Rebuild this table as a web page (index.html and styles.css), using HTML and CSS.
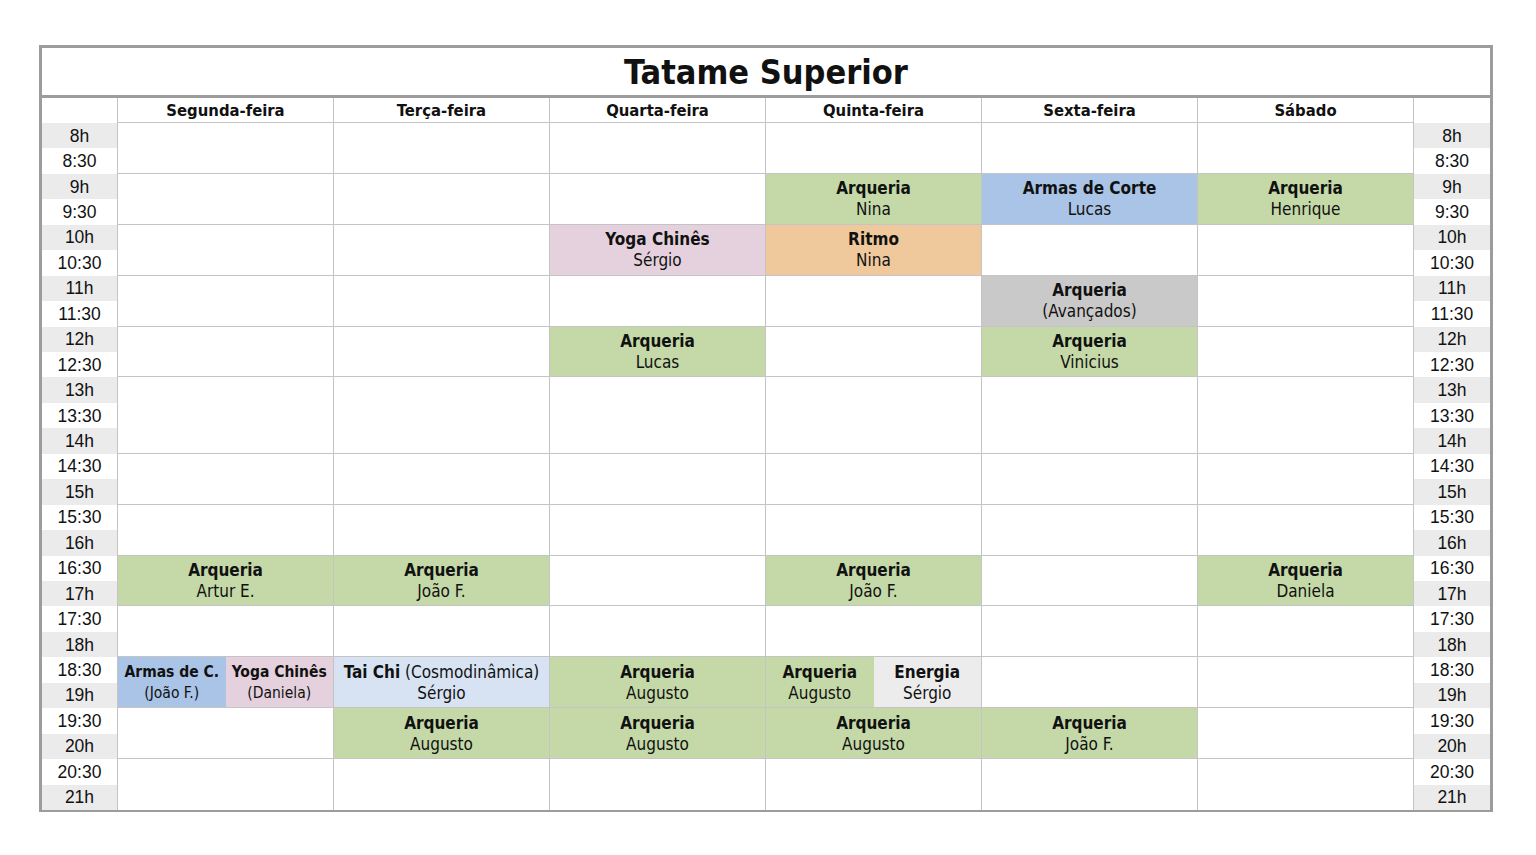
FILE: index.html
```html
<!DOCTYPE html>
<html lang="pt">
<head>
<meta charset="utf-8">
<title>Tatame Superior</title>
<link rel="stylesheet" href="styles.css">
</head>
<body>
<div class="sheet">
  <div class="title">Tatame Superior</div>
  <div class="head">
    <div class="hcell corner"></div>
    <div class="hcell day-h">Segunda-feira</div>
    <div class="hcell day-h">Terça-feira</div>
    <div class="hcell day-h">Quarta-feira</div>
    <div class="hcell day-h">Quinta-feira</div>
    <div class="hcell day-h">Sexta-feira</div>
    <div class="hcell day-h">Sábado</div>
    <div class="hcell corner right"></div>
  </div>
  <div class="body">
    <div class="times">
      <div class="t full">8h</div><div class="t">8:30</div>
      <div class="t full">9h</div><div class="t">9:30</div>
      <div class="t full">10h</div><div class="t">10:30</div>
      <div class="t full">11h</div><div class="t">11:30</div>
      <div class="t full">12h</div><div class="t">12:30</div>
      <div class="t full">13h</div><div class="t">13:30</div>
      <div class="t full">14h</div><div class="t">14:30</div>
      <div class="t full">15h</div><div class="t">15:30</div>
      <div class="t full">16h</div><div class="t">16:30</div>
      <div class="t full">17h</div><div class="t">17:30</div>
      <div class="t full">18h</div><div class="t">18:30</div>
      <div class="t full">19h</div><div class="t">19:30</div>
      <div class="t full">20h</div><div class="t">20:30</div>
      <div class="t full">21h</div>
    </div>

    <div class="day">
      <div class="blk"></div>
      <div class="blk"></div>
      <div class="blk"></div>
      <div class="blk"></div>
      <div class="blk"></div>
      <div class="blk tall"></div>
      <div class="blk"></div>
      <div class="blk"></div>
      <div class="blk ev green"><b>Arqueria</b><span>Artur E.</span></div>
      <div class="blk"></div>
      <div class="blk split">
        <div class="half small ev blue"><b>Armas de C.</b><span>(João F.)</span></div>
        <div class="half small ev pink"><b>Yoga Chinês</b><span>(Daniela)</span></div>
      </div>
      <div class="blk"></div>
      <div class="blk last"></div>
    </div>

    <div class="day">
      <div class="blk"></div>
      <div class="blk"></div>
      <div class="blk"></div>
      <div class="blk"></div>
      <div class="blk"></div>
      <div class="blk tall"></div>
      <div class="blk"></div>
      <div class="blk"></div>
      <div class="blk ev green"><b>Arqueria</b><span>João F.</span></div>
      <div class="blk"></div>
      <div class="blk ev lblue"><span><b>Tai Chi</b> (Cosmodinâmica)</span><span>Sérgio</span></div>
      <div class="blk ev green"><b>Arqueria</b><span>Augusto</span></div>
      <div class="blk last"></div>
    </div>

    <div class="day">
      <div class="blk"></div>
      <div class="blk"></div>
      <div class="blk ev pink"><b>Yoga Chinês</b><span>Sérgio</span></div>
      <div class="blk"></div>
      <div class="blk ev green"><b>Arqueria</b><span>Lucas</span></div>
      <div class="blk tall"></div>
      <div class="blk"></div>
      <div class="blk"></div>
      <div class="blk"></div>
      <div class="blk"></div>
      <div class="blk ev green"><b>Arqueria</b><span>Augusto</span></div>
      <div class="blk ev green"><b>Arqueria</b><span>Augusto</span></div>
      <div class="blk last"></div>
    </div>

    <div class="day">
      <div class="blk"></div>
      <div class="blk ev green"><b>Arqueria</b><span>Nina</span></div>
      <div class="blk ev orange"><b>Ritmo</b><span>Nina</span></div>
      <div class="blk"></div>
      <div class="blk"></div>
      <div class="blk tall"></div>
      <div class="blk"></div>
      <div class="blk"></div>
      <div class="blk ev green"><b>Arqueria</b><span>João F.</span></div>
      <div class="blk"></div>
      <div class="blk split">
        <div class="half ev green"><b>Arqueria</b><span>Augusto</span></div>
        <div class="half ev lgrey"><b>Energia</b><span>Sérgio</span></div>
      </div>
      <div class="blk ev green"><b>Arqueria</b><span>Augusto</span></div>
      <div class="blk last"></div>
    </div>

    <div class="day">
      <div class="blk"></div>
      <div class="blk ev blue"><b>Armas de Corte</b><span>Lucas</span></div>
      <div class="blk"></div>
      <div class="blk ev grey"><b>Arqueria</b><span>(Avançados)</span></div>
      <div class="blk ev green"><b>Arqueria</b><span>Vinicius</span></div>
      <div class="blk tall"></div>
      <div class="blk"></div>
      <div class="blk"></div>
      <div class="blk"></div>
      <div class="blk"></div>
      <div class="blk"></div>
      <div class="blk ev green"><b>Arqueria</b><span>João F.</span></div>
      <div class="blk last"></div>
    </div>

    <div class="day">
      <div class="blk"></div>
      <div class="blk ev green"><b>Arqueria</b><span>Henrique</span></div>
      <div class="blk"></div>
      <div class="blk"></div>
      <div class="blk"></div>
      <div class="blk tall"></div>
      <div class="blk"></div>
      <div class="blk"></div>
      <div class="blk ev green"><b>Arqueria</b><span>Daniela</span></div>
      <div class="blk"></div>
      <div class="blk"></div>
      <div class="blk"></div>
      <div class="blk last"></div>
    </div>

    <div class="times right">
      <div class="t full">8h</div><div class="t">8:30</div>
      <div class="t full">9h</div><div class="t">9:30</div>
      <div class="t full">10h</div><div class="t">10:30</div>
      <div class="t full">11h</div><div class="t">11:30</div>
      <div class="t full">12h</div><div class="t">12:30</div>
      <div class="t full">13h</div><div class="t">13:30</div>
      <div class="t full">14h</div><div class="t">14:30</div>
      <div class="t full">15h</div><div class="t">15:30</div>
      <div class="t full">16h</div><div class="t">16:30</div>
      <div class="t full">17h</div><div class="t">17:30</div>
      <div class="t full">18h</div><div class="t">18:30</div>
      <div class="t full">19h</div><div class="t">19:30</div>
      <div class="t full">20h</div><div class="t">20:30</div>
      <div class="t full">21h</div>
    </div>
  </div>
</div>
</body>
</html>
```

FILE: styles.css
```css
* { box-sizing: border-box; }

html, body {
  margin: 0;
  padding: 0;
  background: #ffffff;
}

body {
  padding: 45px 0 0 39px;
  font-family: "DejaVu Sans Condensed", "DejaVu Sans", sans-serif;
  color: #111111;
}

.sheet {
  width: 1454px;
  border: 3px solid #9c9c9c;
  border-bottom-width: 2px;
  background: #ffffff;
}

.title {
  height: 50px;
  border-bottom: 3px solid #9c9c9c;
  display: flex;
  align-items: center;
  justify-content: center;
  font-weight: bold;
  font-size: 34px;
  padding-top: 1px;
}

.head {
  display: flex;
  height: 25px;
}

.hcell {
  width: 216px;
  border-right: 1px solid #c4c4c4;
  border-bottom: 1px solid #c4c4c4;
  display: flex;
  align-items: center;
  justify-content: center;
  font-weight: bold;
  font-size: 16.5px;
}

.hcell.corner {
  width: 76px;
  border-bottom: none;
}

.hcell.corner.right {
  border-right: none;
}

.body {
  display: flex;
  height: 687px;
}

.times {
  width: 76px;
  display: grid;
  grid-template-rows: repeat(27, 1fr);
  border-right: 1px solid #c4c4c4;
  font-family: "Liberation Sans", Arial, sans-serif;
  font-size: 17.5px;
}

.times.right {
  border-right: none;
}

.t {
  display: flex;
  align-items: center;
  justify-content: center;
  background: #ffffff;
  padding-top: 1px;
}

.t.full {
  background: #ebebeb;
}

.day {
  width: 216px;
  display: grid;
  grid-template-rows: repeat(27, 1fr);
  border-right: 1px solid #c4c4c4;
}

.blk {
  grid-row: span 2;
  border-bottom: 1px solid #c4c4c4;
  min-height: 0;
}

.blk.tall {
  grid-row: span 3;
}

.blk.last {
  border-bottom: none;
}

.ev {
  display: flex;
  flex-direction: column;
  align-items: center;
  justify-content: center;
  font-size: 17px;
  line-height: 21px;
  text-align: center;
  padding-top: 1px;
}

.blk.split {
  display: flex;
}

.half {
  flex: 1 1 0;
}

.half.small {
  font-size: 15.5px;
}

.green  { background: #c4d9a7; }
.blue   { background: #a9c4e6; }
.pink   { background: #e4d1dd; }
.orange { background: #efc99b; }
.grey   { background: #c9c9c9; }
.lblue  { background: #d7e3f3; }
.lgrey  { background: #ececec; }
```
